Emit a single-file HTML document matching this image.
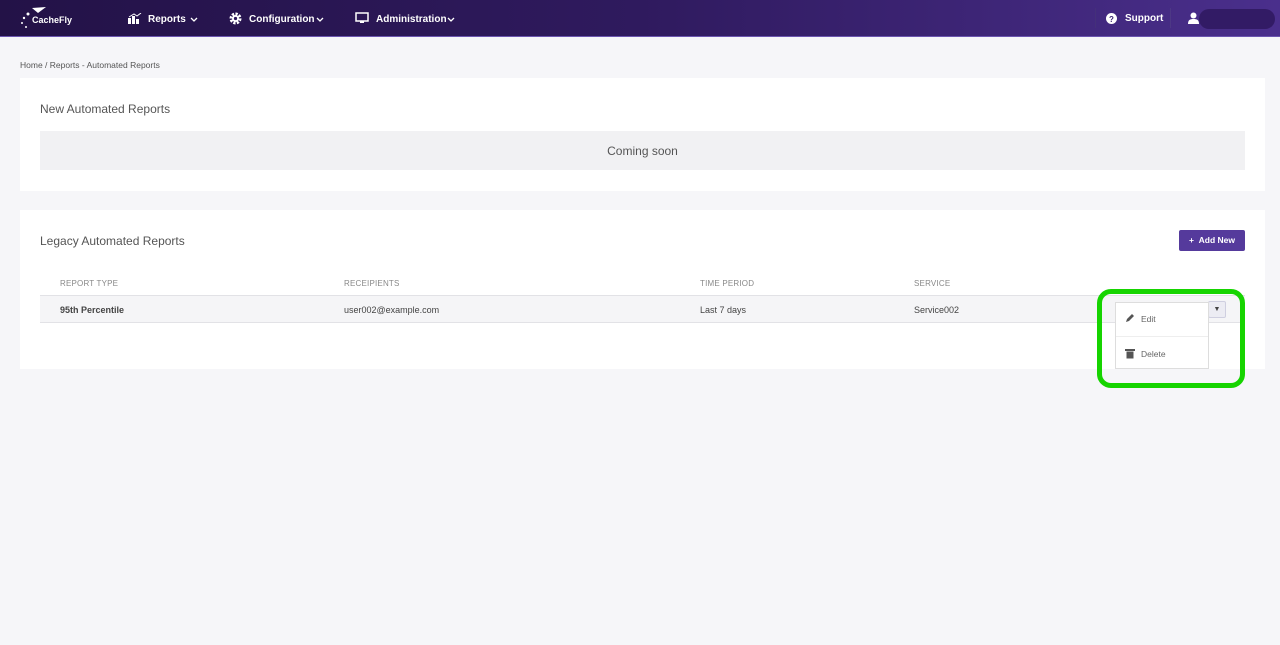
<!DOCTYPE html>
<html><head><style>
*{box-sizing:border-box;margin:0;padding:0}
body{width:1280px;height:645px;background:#f6f6f9;font-family:"Liberation Sans",sans-serif;position:relative;overflow:hidden;color:#333}
.nav{position:absolute;left:0;top:0;width:1280px;height:37px;background:linear-gradient(90deg,#231247 0%,#2f1a5e 50%,#4a2f8c 100%);border-bottom:1px solid #6b55b0}
.nav span{position:absolute;color:#fff;font-size:10px;font-weight:bold;top:14px}
.chev{position:absolute;top:17px}
.card{position:absolute;left:20px;width:1245px;background:#fff}
.abs{position:absolute}
.th{position:absolute;top:279px;font-size:8px;color:#888;letter-spacing:.2px}
.td{position:absolute;top:305px;font-size:9px;color:#444}
</style></head><body>
<div class="nav">
 <svg class="abs" style="left:18px;top:6px" width="60" height="26"><path d="M14 2l14 -1-8 6z" fill="#fff"/><circle cx="10" cy="8" r="1.5" fill="#fff"/><circle cx="6" cy="12" r="1.2" fill="#fff"/><circle cx="4" cy="17" r="1" fill="#fff"/><circle cx="8" cy="21" r="1" fill="#fff"/><text x="14" y="17" fill="#fff" font-size="9" font-weight="bold" font-family="Liberation Sans">CacheFly</text></svg>
 <svg class="abs" style="left:128px;top:13px" width="14" height="11"><rect x="0" y="5" width="3" height="6" fill="#fff"/><rect x="4" y="3" width="3" height="8" fill="#fff"/><rect x="8" y="6" width="3" height="5" fill="#fff"/><path d="M1 4l5-3 3 2 4-3" stroke="#fff" fill="none"/></svg>
 <span style="left:148px">Reports</span>
 <svg class="chev" style="left:190px" width="8" height="5"><path d="M1 1l3 3 3-3" stroke="#fff" stroke-width="1.3" fill="none"/></svg>
 <svg class="abs" style="left:229px;top:12px" width="13" height="13"><circle cx="6.5" cy="6.5" r="4.5" fill="none" stroke="#fff" stroke-width="3" stroke-dasharray="2.2 1.3"/><circle cx="6.5" cy="6.5" r="3.5" fill="#fff"/><circle cx="6.5" cy="6.5" r="1.6" fill="#2c175a"/></svg>
 <span style="left:249px">Configuration</span>
 <svg class="chev" style="left:316px" width="8" height="5"><path d="M1 1l3 3 3-3" stroke="#fff" stroke-width="1.3" fill="none"/></svg>
 <svg class="abs" style="left:355px;top:12px" width="14" height="12"><rect x="1" y="1" width="12" height="8" fill="none" stroke="#fff" stroke-width="1.5"/><rect x="5" y="9" width="4" height="2" fill="#fff"/></svg>
 <span style="left:376px">Administration</span>
 <svg class="chev" style="left:447px" width="8" height="5"><path d="M1 1l3 3 3-3" stroke="#fff" stroke-width="1.3" fill="none"/></svg>
 <div class="abs" style="left:1095px;top:8px;width:1px;height:20px;background:#44307a"></div>
 <svg class="abs" style="left:1106px;top:13px" width="11" height="11"><circle cx="5.5" cy="5.5" r="5.5" fill="#fff"/><text x="3" y="9" font-size="8" font-weight="bold" fill="#3a2470" font-family="Liberation Sans">?</text></svg>
 <span style="left:1125px;top:13px">Support</span>
 <div class="abs" style="left:1170px;top:8px;width:1px;height:20px;background:#4d3885"></div>
 <svg class="abs" style="left:1188px;top:12px" width="11" height="12"><circle cx="5.5" cy="3.5" r="3" fill="#fff"/><path d="M0 12c0-4 2-5 5.5-5s5.5 1 5.5 5z" fill="#fff"/></svg>
 <div class="abs" style="left:1199px;top:9px;width:76px;height:20px;border-radius:10px;background:#321b65"></div>
</div>
<div class="abs" style="left:20px;top:60px;font-size:8.5px;color:#555">Home / Reports - Automated Reports</div>
<div class="card" style="top:78px;height:113px">
 <div class="abs" style="left:20px;top:24px;font-size:12px;color:#555">New Automated Reports</div>
 <div class="abs" style="left:20px;top:53px;width:1205px;height:39px;background:#f1f1f3;text-align:center;line-height:41px;font-size:12px;color:#555">Coming soon</div>
</div>
<div class="card" style="top:210px;height:159px">
 <div class="abs" style="left:20px;top:24px;font-size:12px;color:#555">Legacy Automated Reports</div>
 <div class="abs" style="left:1159px;top:20px;width:66px;height:21px;background:#553a9c;border-radius:2px;color:#fff;font-size:8.5px;font-weight:bold;line-height:21px;text-align:center">+ &nbsp;Add New</div>
</div>
<div class="th" style="left:60px">REPORT TYPE</div>
<div class="th" style="left:344px">RECEIPIENTS</div>
<div class="th" style="left:700px">TIME PERIOD</div>
<div class="th" style="left:914px">SERVICE</div>
<div class="abs" style="left:40px;top:295px;width:1205px;height:28px;background:#f5f5f7;border-top:1px solid #e2e2e6;border-bottom:1px solid #e2e2e6"></div>
<div class="td" style="left:60px;font-weight:bold">95th Percentile</div>
<div class="td" style="left:344px">user002@example.com</div>
<div class="td" style="left:700px">Last 7 days</div>
<div class="td" style="left:914px">Service002</div>
<div class="abs" style="left:1208px;top:301px;width:18px;height:17px;border:1px solid #cfcfe0;background:#ececf3;border-radius:2px;font-size:7px;color:#444;text-align:center;line-height:15px">▼</div>
<div class="abs" style="left:1115px;top:302px;width:94px;height:67px;background:#fff;border:1px solid #ddd">
 <svg class="abs" style="left:9px;top:10px" width="10" height="10"><path d="M1 9l1-3 5-5 2 2-5 5z" fill="#555"/></svg>
 <div class="abs" style="left:25px;top:11px;font-size:8.5px;color:#666">Edit</div>
 <div class="abs" style="left:0;top:33px;width:92px;height:1px;background:#eee"></div>
 <svg class="abs" style="left:9px;top:45px" width="10" height="11"><rect x="0" y="1" width="10" height="2" fill="#555"/><rect x="1.5" y="3.5" width="7" height="7" fill="#555"/></svg>
 <div class="abs" style="left:25px;top:46px;font-size:8.5px;color:#666">Delete</div>
</div>
<div class="abs" style="left:1097px;top:289px;width:148px;height:99px;border:5px solid #16d400;border-radius:14px"></div>
</body></html>
